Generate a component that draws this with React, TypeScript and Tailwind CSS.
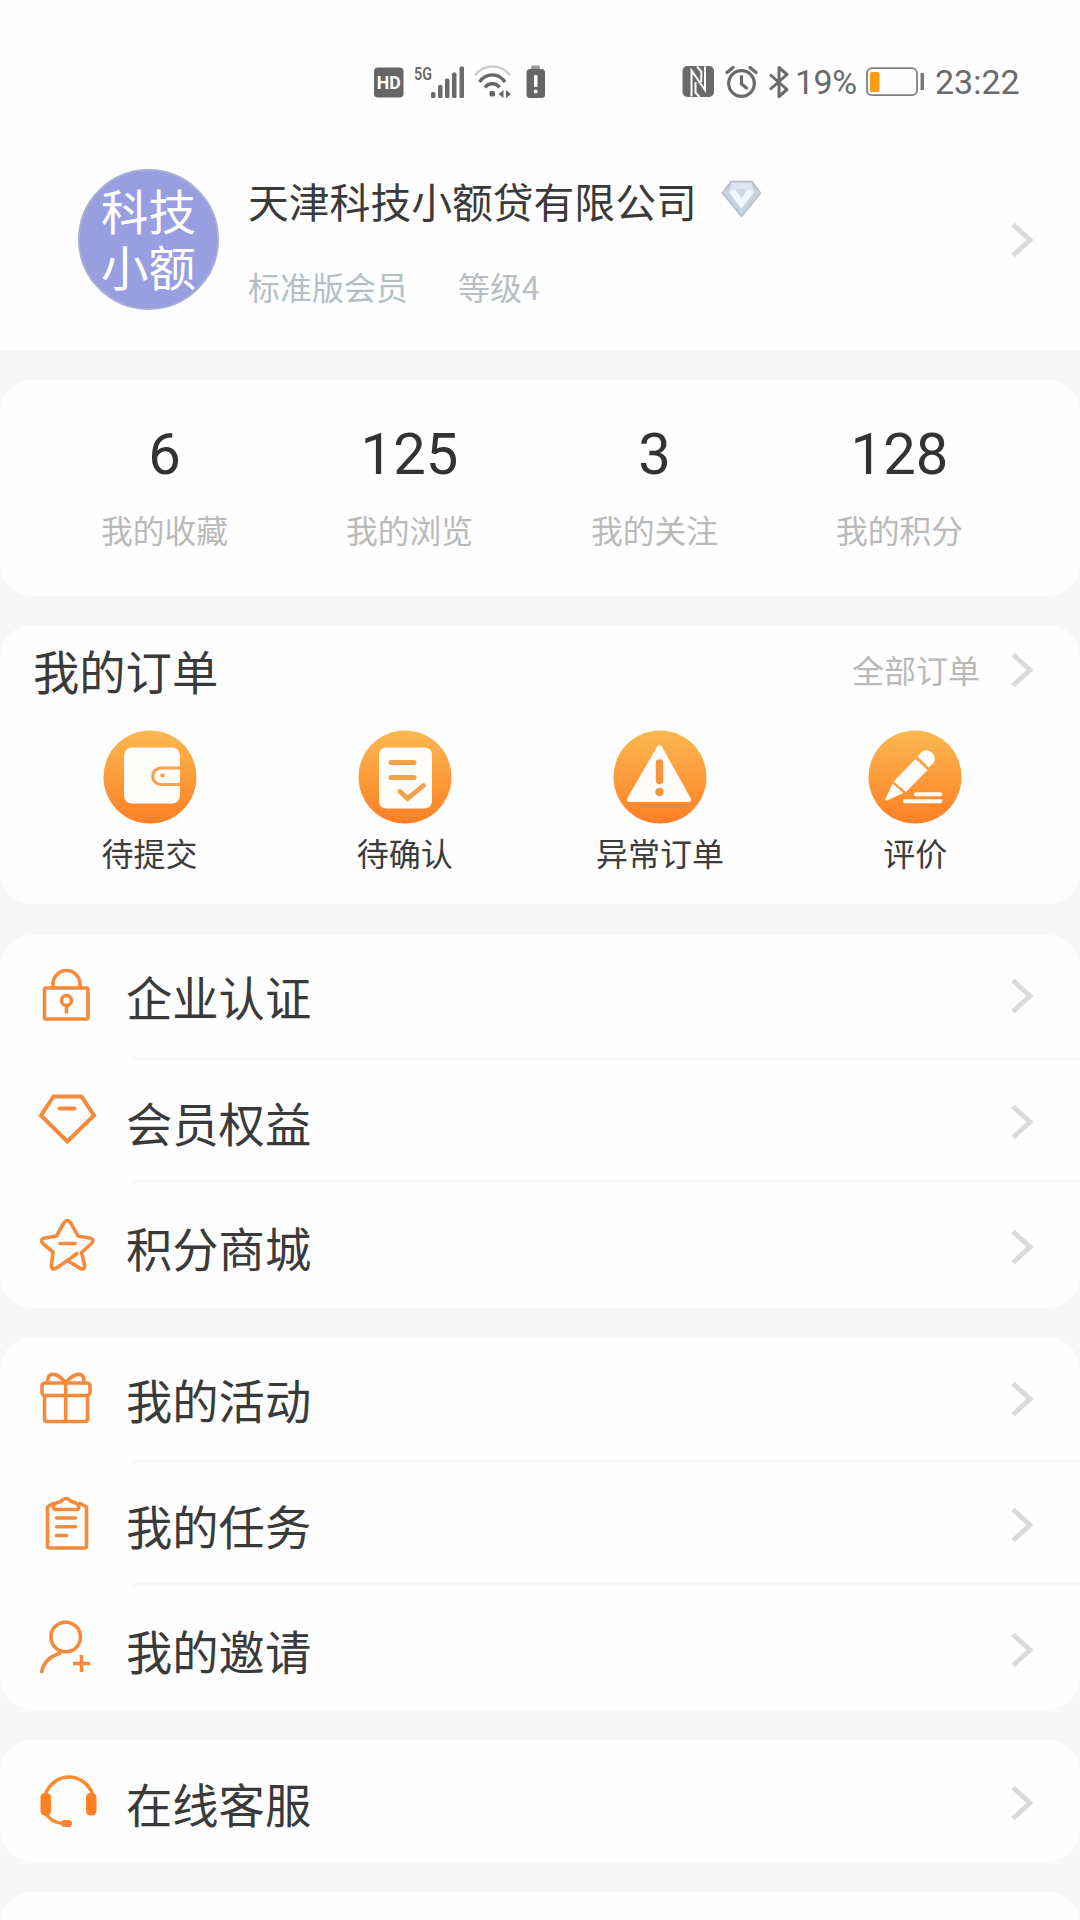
import type { ReactNode } from "react";

const ORANGE = "#f58a3c";

function Chevron() {
  return (
    <svg width="24" height="38" viewBox="0 0 24 38" fill="none" stroke="#dadada" strokeWidth="4.8" className="shrink-0">
      <path d="M2 3.500 19 19 2 34.500" />
    </svg>
  );
}

function StatusBar() {
  return (
    <div className="flex h-[164px] items-center pl-[374px] text-[#6a6a6a]">
      <svg width="30" height="31" viewBox="0 0 30 31" className="shrink-0">
        <rect width="29.500" height="30" y=".5" rx="4" fill="#666" />
        <text x="14.700" y="22" textAnchor="middle" fontFamily="Roboto" fontWeight="700" fontSize="18" textLength="24" lengthAdjust="spacingAndGlyphs" fill="#fff">HD</text>
      </svg>
      <svg width="52" height="42" viewBox="0 -4 52 42" className="ml-[9px] shrink-0 overflow-visible">
        <text x="1" y="15" fontFamily="Roboto" fontWeight="600" fontSize="19" textLength="18" lengthAdjust="spacingAndGlyphs" fill="#6a6a6a">5G</text>
        <g fill="#6a6a6a">
          <rect x="18" y="27" width="4.500" height="6" rx="1.500" />
          <rect x="25" y="20" width="4.500" height="13" rx="1.500" />
          <rect x="32" y="13.500" width="4.500" height="19.500" rx="1.500" />
          <rect x="39" y="7.500" width="4.500" height="25.500" rx="1.500" />
          <rect x="46.500" y="1.500" width="4.500" height="31.500" rx="1.500" />
        </g>
      </svg>
      <svg width="38" height="34" viewBox="0 0 38 34" fill="none" className="ml-[9px] shrink-0">
        <path d="M1 10.500C10-1.500 27-1.500 36 10.500" stroke="#cfcfcf" strokeWidth="2.600" />
        <path d="M5.500 17C12 7.500 24.500 7.500 31 17" stroke="#666" strokeWidth="3.400" />
        <path d="M11 22.500C14.500 17.500 22 17.500 25.500 22.500" stroke="#666" strokeWidth="3.400" />
        <rect x="15.500" y="26" width="5.500" height="5.500" rx="1.500" fill="#666" />
        <path d="M29.500 25v8l-5-4zM32 25v8l5-4z" fill="#666" />
      </svg>
      <svg width="20" height="34" viewBox="0 0 20 34" className="ml-[14px] shrink-0">
        <rect x="5" y="0.500" width="9" height="4" rx="1.500" fill="#999" />
        <rect x=".5" y="4" width="18.500" height="29" rx="3.500" fill="#666" />
        <rect x="8" y="10" width="3.500" height="12" rx="1" fill="#fff" />
        <circle cx="9.700" cy="26.500" r="2" fill="#fff" />
      </svg>
      <svg width="33" height="34" viewBox="0 0 33 34" className="ml-[136px] shrink-0">
        <rect x=".5" y="1" width="31.500" height="31" rx="5" fill="#6a6a6a" />
        <path d="M9.500 31.500V5.500L23 25V1.500" fill="none" stroke="#fff" strokeWidth="2" />
        <path d="M13.500 17v10.500l4 4.500M19.300 17V6.500L15 1.500" fill="none" stroke="#fff" strokeWidth="2" />
      </svg>
      <svg width="33" height="34" viewBox="0 0 33 34" fill="none" stroke="#6a6a6a" strokeWidth="3.200" strokeLinecap="round" className="ml-[10px] shrink-0">
        <circle cx="16.500" cy="18.500" r="12.800" />
        <path d="M16.500 11.500v7.500l5 4M2 7.500 8 2.500M31 7.500 25 2.500" />
      </svg>
      <svg width="22" height="34" viewBox="0 0 22 34" fill="none" stroke="#6a6a6a" strokeWidth="3" strokeLinejoin="round" className="ml-[10px] shrink-0">
        <path d="M2 9.500 19 24.500 11 31.500V2.500l8 7L2 24.500" />
      </svg>
      <span className="ml-[5px] w-[63px] font-[Roboto] text-[34px] leading-none tracking-[-0.500px]">19%</span>
      <svg width="60" height="30" viewBox="0 0 60 30" className="ml-[8px] shrink-0">
        <rect x="1" y="1.200" width="50" height="27" rx="5" fill="none" stroke="#808080" strokeWidth="1.800" />
        <rect x="4" y="5" width="9.500" height="20" rx="1.500" fill="#fb9d14" />
        <rect x="54.500" y="6" width="3.500" height="17" fill="#777" />
      </svg>
      <span className="ml-[9px] font-[Roboto] text-[34px] leading-none">23:22</span>
    </div>
  );
}

function Profile() {
  return (
    <section className="flex h-[187px] pl-[78px] pr-[45px]">
      <div className="mt-[5px] h-[141px] w-[141px] shrink-0 whitespace-pre-line rounded-full border-2 border-[#a5afd2] bg-[#989fe1] pt-[11px] text-center text-[47.500px] leading-[56px] text-white">
        {"科技\n小额"}
      </div>
      <div className="ml-[29px] flex flex-col">
        <div className="mt-[7px] flex h-[60px] items-center whitespace-nowrap text-[40.800px] text-[#3a3a3a]">
          天津科技小额贷有限公司
          <svg width="41" height="38" viewBox="0 0 41 38" className="mb-[5px] ml-[24px]">
            <path d="M10 1.500h21l8.500 11.500L20.500 36.500 1.500 13z" fill="#c5d3de" stroke="#b6bdc6" strokeWidth="1.500" strokeLinejoin="round" />
            <path d="M11 3h19l3 9-12.500 17L8 12z" fill="#dce8f1" />
            <path d="M8 12l6-3 6.500 9L27 9l6 3-12.500 16.500z" fill="#f0f7fb" />
            <path d="M14 9h13l-6.500 9z" fill="#cbdae6" />
          </svg>
        </div>
        <div className="mt-[35px] flex items-center gap-[50px] text-[32px] leading-[40px]">
          <span className="text-[#b3bec6]">标准版会员</span>
          <span className="text-[#b8bec2]">等级4</span>
        </div>
      </div>
      <div className="ml-auto mt-[57px]"><Chevron /></div>
    </section>
  );
}

const stats = [
  { value: "6", label: "我的收藏" },
  { value: "125", label: "我的浏览" },
  { value: "3", label: "我的关注" },
  { value: "128", label: "我的积分" },
];

function Stats() {
  return (
    <section className="mt-[29px] h-[216px] rounded-[32px] bg-[#fefefe]">
      <div className="ml-[42px] grid w-[980px] grid-cols-4 pt-[44px]">
        {stats.map((s) => (
          <div key={s.label} className="flex flex-col items-center">
            <span className="font-[Roboto] text-[58px] leading-[60px] text-[#333]">{s.value}</span>
            <span className="mt-[25px] text-[31.800px] leading-[40px] text-[#bababa]">{s.label}</span>
          </div>
        ))}
      </div>
    </section>
  );
}

function Disc({ id, children }: { id: string; children: ReactNode }) {
  return (
    <svg width="94" height="94" viewBox="0 0 94 94">
      <defs>
        <linearGradient id={id} x1="0" y1="0" x2="0" y2="1">
          <stop offset="0" stopColor="#fbb850" />
          <stop offset="1" stopColor="#fd7f25" />
        </linearGradient>
      </defs>
      <circle cx="47" cy="47" r="46.500" fill={`url(#${id})`} />
      {children}
    </svg>
  );
}

const orders = [
  {
    label: "待提交",
    icon: (
      <Disc id="submit">
        <rect x="21" y="17.500" width="56" height="56" rx="8" fill="#fffdfa" />
        <path d="M78 38H58a8 8 0 0 0 0 16.500h20" fill="none" stroke="#f6a24d" strokeWidth="3.200" />
        <circle cx="59.500" cy="45.500" r="2.200" fill="#f6a24d" />
      </Disc>
    ),
  },
  {
    label: "待确认",
    icon: (
      <Disc id="confirm">
        <rect x="21" y="17.500" width="53" height="61" rx="7" fill="#fffdfa" />
        <g fill="none" stroke="#f5a04b" strokeWidth="5" strokeLinecap="round">
          <path d="M33 32.500h23M33 47.500h23" />
          <path d="M42 61.500l7.500 7 16-13" strokeWidth="4.800" />
        </g>
      </Disc>
    ),
  },
  {
    label: "异常订单",
    icon: (
      <Disc id="abnormal">
        <path d="M46.500 17.500 75.500 69.500h-59z" fill="#fffdfa" stroke="#fffdfa" strokeWidth="5" strokeLinejoin="round" />
        <path d="M46.500 33v17.500" stroke="#f5963f" strokeWidth="7.500" strokeLinecap="round" />
        <circle cx="46.500" cy="62" r="4.300" fill="#f5963f" />
      </Disc>
    ),
  },
  {
    label: "评价",
    icon: (
      <Disc id="review">
        <g fill="#fffdfa">
          <path d="M49.500 26.500l4-4.500c6.500-5.500 17 4 12 11L60.500 37.500z" />
          <path d="M47.500 29 59.500 40 38 62 25.500 51.500z" />
          <path d="M24.500 53.500 35.500 63 19 70.500c-1.500.5-2-.5-1.500-1.500z" />
        </g>
        <path d="M48 64.300h24.500M37 71.300h35.500" stroke="#fffdfa" strokeWidth="4" strokeLinecap="round" />
      </Disc>
    ),
  },
];

function Orders() {
  return (
    <section className="mt-[29px] h-[279px] rounded-[32px] bg-[#fefefe]">
      <header className="flex h-[90px] items-center pl-[33px] pr-[45px]">
        <h2 className="text-[46.300px] leading-[60px] text-[#3a3a3a]">我的订单</h2>
        <span className="ml-auto mr-[31px] pb-[2px] text-[32px] leading-[40px] text-[#b9b9b9]">全部订单</span>
        <Chevron />
      </header>
      <div className="ml-[22px] mt-[15px] grid w-[1021px] grid-cols-4">
        {orders.map((o) => (
          <div key={o.label} className="flex flex-col items-center">
            {o.icon}
            <span className="mt-[8px] text-[32px] leading-[40px] text-[#3c3c3c]">{o.label}</span>
          </div>
        ))}
      </div>
    </section>
  );
}

function LineIcon({ children }: { children: ReactNode }) {
  return (
    <svg width="60" height="60" viewBox="0 0 60 60" fill="none" stroke={ORANGE} strokeWidth="3.600" strokeLinecap="round" strokeLinejoin="round" className="shrink-0">
      {children}
    </svg>
  );
}

const lock = (
  <LineIcon>
    <rect x="7.500" y="22" width="43.500" height="31" rx="1.500" />
    <path d="M16 22v-4a13.500 13.500 0 0 1 27 0v4" />
    <circle cx="29.500" cy="34.500" r="5" />
    <path d="M29.500 40v6" />
  </LineIcon>
);
const diamond = (
  <LineIcon>
    <path d="M16.500 4.500h28L57 23.500 30.300 49.500 4 23.500z" strokeWidth="4" strokeLinejoin="miter" />
    <path d="M22.500 16.500h15" strokeWidth="4" />
  </LineIcon>
);
const star = (
  <LineIcon>
    <path d="M40 36.500 30.500 43.500 19.500 51Q14 54 14.500 48L16 35 6.500 27Q2 22 8 21L19.500 19 26.500 6.500q3.800-6 7.600 0L41 19l11.500 2q6 1 1.500 6L44.500 35.500 47.500 48q.5 6-5 3L30.500 43.500" />
    <path d="M23 26.500h15" />
  </LineIcon>
);
const gift = (
  <LineIcon>
    <rect x="5" y="14" width="48" height="12.500" rx="3" />
    <path d="M7.500 27v23q0 2.500 2.500 2.500h38q2.500 0 2.500-2.500V27M28.700 14v38.500" />
    <path d="M11 14C9 3.500 19 1.500 28.700 14 38.500 1.500 49 3.500 46.500 14" />
  </LineIcon>
);
const clipboard = (
  <LineIcon>
    <path d="M16 8.500l-5.500 3.500V51q0 2 2 2h35q2 0 2-2V12L43 8.500" />
    <path d="M18 14.500h22.500q3.500-3-1.500-6.500l-5-1.500q-5-6-10 0L19 8q-5 3.500-1 6.500z" />
    <path d="M19.500 23h19M19.500 31.700h19M19.500 40.500h10" />
  </LineIcon>
);
const invite = (
  <LineIcon>
    <circle cx="28.700" cy="17" r="14.800" />
    <path d="M24 33C13 36 6 43 4.500 53M36 43.500h17M44.500 35v17" strokeLinecap="butt" />
  </LineIcon>
);
const headset = (
  <LineIcon>
    <path d="M8 22C17-2 47-2 56 22M8.500 40q5 9.500 18 10.500" stroke="#fb8b2c" strokeWidth="3.400" />
    <rect x="3.500" y="20" width="10.500" height="22.500" rx="4.500" fill="#fb8122" stroke="none" />
    <rect x="49" y="20" width="10.500" height="22.500" rx="4.500" fill="#fb8122" stroke="none" />
    <rect x="24" y="47" width="11" height="7" rx="3.500" fill="#f6853a" stroke="none" />
  </LineIcon>
);

type Item = { label: string; icon: ReactNode };

function Row({ item, className }: { item: Item; className: string }) {
  return (
    <div className={`flex items-center pl-[37px] pr-[45px] ${className}`}>
      {item.icon}
      <span className="ml-[29px] text-[46.300px] leading-[60px] text-[#3a3a3a]">{item.label}</span>
      <span className="ml-auto"><Chevron /></span>
    </div>
  );
}

function Divider() {
  return <div className="ml-[132px] h-[3px] bg-[#f8f8f8]" />;
}

function Menu({ items, className }: { items: [Item, Item, Item]; className: string }) {
  return (
    <section className={`rounded-[32px] bg-[#fefefe] ${className}`}>
      <Row item={items[0]} className="h-[122px]" />
      <Divider />
      <Row item={items[1]} className="h-[120px] pt-[4px]" />
      <Divider />
      <Row item={items[2]} className="h-[121px] pt-[6px]" />
    </section>
  );
}

export default function App() {
  return (
    <main className="flex h-[1920px] w-[1080px] flex-col overflow-hidden bg-[#f7f7f7] font-['Noto_Sans_CJK_SC',sans-serif] [&>*]:shrink-0">
      <div className="bg-[#fefefe]">
        <StatusBar />
        <Profile />
      </div>
      <Stats />
      <Orders />
      <Menu
        className="mt-[31px] h-[373px]"
        items={[
          { label: "企业认证", icon: lock },
          { label: "会员权益", icon: diamond },
          { label: "积分商城", icon: star },
        ]}
      />
      <Menu
        className="mt-[30px] h-[371px]"
        items={[
          { label: "我的活动", icon: gift },
          { label: "我的任务", icon: clipboard },
          { label: "我的邀请", icon: invite },
        ]}
      />
      <section className="mt-[31px] h-[121px] rounded-[32px] bg-[#fefefe]">
        <Row item={{ label: "在线客服", icon: headset }} className="h-[125px]" />
      </section>
      <section className="mt-[31px] h-[60px] rounded-t-[32px] bg-[#fefefe]" />
    </main>
  );
}
